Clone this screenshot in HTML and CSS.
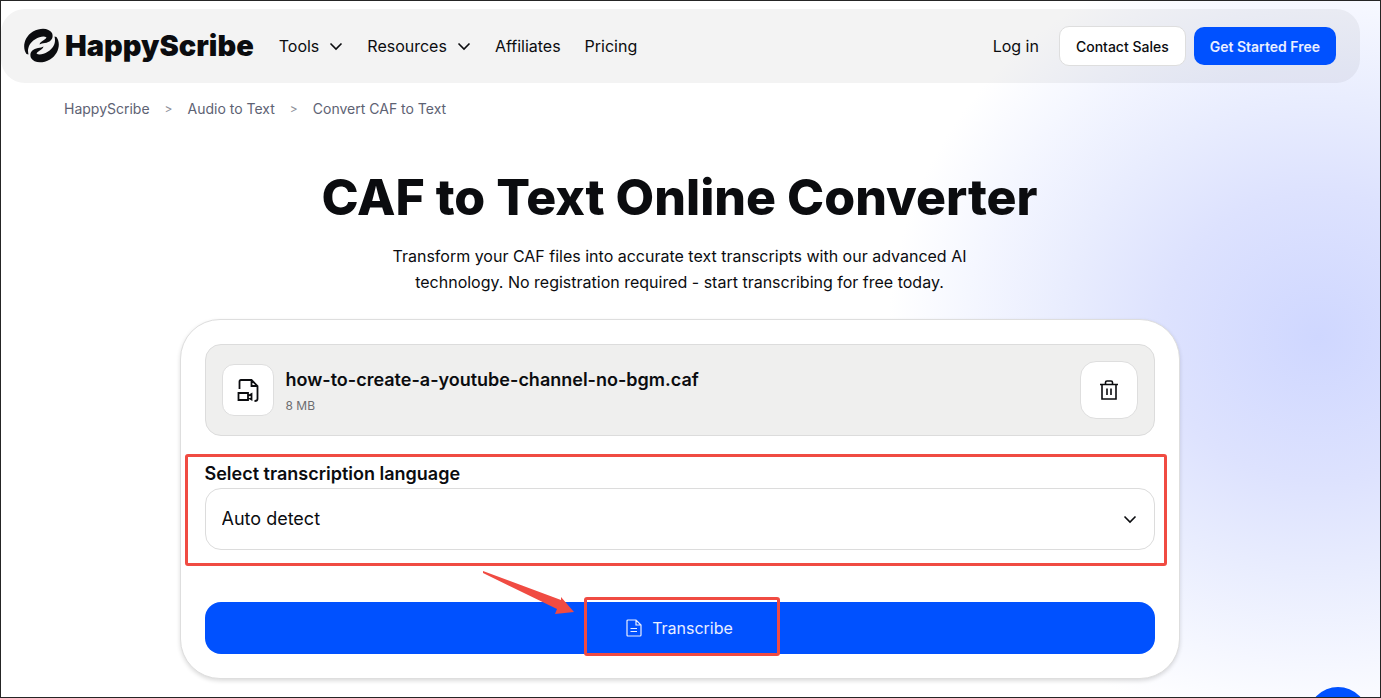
FILE: index.html
```html
<!DOCTYPE html>
<html lang="en">
<head>
<meta charset="utf-8">
<title>CAF to Text Online Converter</title>
<link rel="stylesheet" href="styles.css">
</head>
<body>
<div class="page">
  <header class="topbar">
    <a class="brand" href="#">
      <svg class="brand-mark" viewBox="0 0 36 36" aria-hidden="true">
        <path d="M2.500 26C-2 20 0 9 9 3.500C17 -1 25 0 28 5C30 10 27 14 21 15C18.500 15.400 17 15.500 15.500 16.500C16.500 13 21 12.500 22.500 9.500C19 6.500 8 11 5 18C3.500 22 4 24 4.500 26.500Z"/>
        <path d="M2.500 26C-2 20 0 9 9 3.500C17 -1 25 0 28 5C30 10 27 14 21 15C18.500 15.400 17 15.500 15.500 16.500C16.500 13 21 12.500 22.500 9.500C19 6.500 8 11 5 18C3.500 22 4 24 4.500 26.500Z" transform="rotate(180 17.500 17.500)"/>
      </svg>
      <span class="brand-name">HappyScribe</span>
    </a>
    <nav class="menu" aria-label="Main">
      <button class="menu-item" type="button">Tools <svg class="chevron" viewBox="0 0 14 14" aria-hidden="true"><path d="M1.500 4.500L7 10l5.500-5.500"/></svg></button>
      <button class="menu-item" type="button">Resources <svg class="chevron" viewBox="0 0 14 14" aria-hidden="true"><path d="M1.500 4.500L7 10l5.500-5.500"/></svg></button>
      <a class="menu-item" href="#">Affiliates</a>
      <a class="menu-item" href="#">Pricing</a>
    </nav>
    <div class="actions">
      <a class="login" href="#">Log in</a>
      <button class="btn btn-light" type="button">Contact Sales</button>
      <button class="btn btn-blue" type="button">Get Started Free</button>
    </div>
  </header>

  <nav class="crumbs" aria-label="Breadcrumb">
    <a href="#">HappyScribe</a><span class="sep">&gt;</span><a href="#">Audio to Text</a><span class="sep">&gt;</span><a href="#">Convert CAF to Text</a>
  </nav>

  <main class="main">
    <h1 class="title">CAF to Text Online Converter</h1>
    <p class="lead">Transform your CAF files into accurate text transcripts with our advanced AI technology. No registration required - start transcribing for free today.</p>

    <section class="card">
      <div class="file">
        <span class="file-icon">
          <svg viewBox="0 0 24 24" aria-hidden="true"><path d="M3.500 11V3.500Q3.500 2 5 2H15.500L21.500 8V21Q21.500 23 18.500 23M15.500 2V8H21.500M2.500 15H12V22H2.500ZM12 18L15.500 16V21.500L12 19.500"/></svg>
        </span>
        <div class="file-text">
          <div class="file-name">how-to-create-a-youtube-channel-no-bgm.caf</div>
          <div class="file-size">8 MB</div>
        </div>
        <button class="delete" type="button" aria-label="Delete file">
          <svg viewBox="0 0 20 20" aria-hidden="true"><path d="M1 4.500H19M3 4.500V19H17V4.500M6.500 4.500V2.500Q6.500 1 8 1H12Q13.500 1 13.500 2.500V4.500M8 8.500V15M12 8.500V15"/></svg>
        </button>
      </div>
      <div class="language">
        <label for="language">Select transcription language</label>
        <div class="select-box">
          <select id="language"><option>Auto detect</option></select>
          <svg class="select-chevron" viewBox="0 0 14 14" aria-hidden="true"><path d="M1.500 4.500L7 10l5.500-5.500"/></svg>
        </div>
      </div>
      <div class="submit">
        <svg class="arrow" viewBox="0 0 92 44" aria-hidden="true"><path d="M1 0L79 29V26L92 41L73 43L75 38L1 2Z"/></svg>
        <button class="transcribe" type="button">
          <svg viewBox="0 0 16 18" aria-hidden="true"><path d="M2 1H10L15 6V16Q15 17 14 17H2Q1 17 1 16V2Q1 1 2 1ZM10 1V6H15M4.500 9.500H11M4.500 12.500H11"/></svg>
          Transcribe
        </button>
        <span class="button-mark"></span>
      </div>
    </section>
  </main>
  <button class="chat" type="button" aria-label="Chat"></button>
</div>
</body>
</html>
```

FILE: styles.css
```css
* { box-sizing: border-box; }

body {
  margin: 0;
  color: #0b0c0f;
  font-family: Inter, "Liberation Sans", sans-serif;
  font-size: 16px;
}

a { color: inherit; text-decoration: none; }

button, select { color: inherit; font: inherit; cursor: pointer; }

svg { fill: none; stroke: currentColor; flex: none; }

.page {
  position: relative;
  min-height: 100vh;
  padding: 8px 20px 18px 0;
  overflow: hidden;
  border: 1px solid #252525;
  background: radial-gradient(ellipse 430px 400px at calc(100% - 62px) 336px, #cfd7ff 0%, #dde2fe 36%, #e9edfe 60%, #f5f7ff 82%, #fff 100%);
}

.topbar {
  display: flex;
  align-items: center;
  height: 74px;
  padding: 0 24px 0 23px;
  border-radius: 24px;
  background: rgba(10, 10, 10, 0.05);
}

.brand { display: flex; align-items: center; gap: 5px; }

.brand-mark { width: 36px; height: 36px; fill: currentColor; stroke: none; }

.brand-name { font-size: 29px; font-weight: 900; line-height: 36px; }

.menu { display: flex; align-items: center; gap: 24px; margin-left: 25px; }

.menu-item {
  display: flex;
  align-items: center;
  gap: 10px;
  padding: 0;
  border: 0;
  background: none;
}

.chevron { width: 14px; height: 14px; stroke-width: 1.6; }

.actions { display: flex; align-items: center; gap: 8px; margin-left: auto; }

.login { margin-right: 12px; }

.btn {
  height: 38px;
  padding: 0 16px;
  border: 0;
  border-radius: 10px;
  font-size: 14px;
  font-weight: 500;
}

.btn-light { height: 40px; border: 1px solid #dedede; background: #fff; }

.btn-blue { color: #e9eeff; font-weight: 600; background: #0051ff; }

.crumbs {
  display: flex;
  align-items: center;
  gap: 15px;
  padding: 16px 0 0 63px;
  color: #5d6273;
  font-size: 14px;
  line-height: 20px;
}

.sep { color: #8d8f99; font-size: 12px; }

.main {
  display: flex;
  flex-direction: column;
  align-items: center;
  padding-right: 2px;
}

.title {
  margin: 48px 0 0;
  font-size: 50px;
  font-weight: 800;
  line-height: 60px;
  text-align: center;
}

.lead {
  width: 600px;
  max-width: 100%;
  margin: 16px 0 24px;
  line-height: 26px;
  text-align: center;
}

.card {
  width: 1000px;
  max-width: 100%;
  padding: 24px;
  border: 1px solid #dedede;
  border-radius: 40px;
  background: #fff;
  box-shadow: 0 2px 4px rgba(0, 0, 0, 0.14);
}

.file {
  display: flex;
  align-items: center;
  gap: 12px;
  padding: 16px;
  border: 1px solid #dcdcdc;
  border-radius: 16px;
  background: #efefee;
}

.file-icon {
  display: grid;
  place-items: center;
  width: 52px;
  height: 52px;
  border: 1px solid #dedede;
  border-radius: 12px;
  background: #fff;
}

.file-icon svg { width: 24px; height: 24px; stroke-width: 1.8; }

.file-text { flex: 1; padding-top: 2px; }

.file-name { font-size: 18px; font-weight: 600; line-height: 28px; }

.file-size { margin-top: 2px; color: #6d6d70; font-size: 12px; line-height: 20px; }

.delete {
  display: grid;
  place-items: center;
  width: 58px;
  height: 58px;
  padding: 0;
  border: 1px solid #dedede;
  border-radius: 16px;
  background: #fff;
}

.delete svg { width: 20px; height: 20px; stroke-width: 1.6; }

.language {
  margin: 18px -12px 0 -20px;
  padding: 3px 9px 13px 17px;
  border: 3px solid #f04b42;
  border-radius: 3px;
}

.language label {
  display: block;
  margin-bottom: 1px;
  font-size: 18px;
  font-weight: 600;
  line-height: 27px;
}

.select-box { position: relative; }

.select-box select {
  display: block;
  width: 100%;
  height: 62px;
  padding: 0 16px 2px;
  appearance: none;
  border: 1px solid #dcdcdc;
  border-radius: 16px;
  background: #fff;
  font-size: 18px;
}

.select-chevron {
  position: absolute;
  top: 24px;
  right: 18px;
  width: 14px;
  height: 14px;
  stroke-width: 1.6;
  pointer-events: none;
}

.submit { position: relative; margin-top: 36px; }

.transcribe {
  display: flex;
  align-items: center;
  justify-content: center;
  gap: 10px;
  width: 100%;
  height: 52px;
  border: 0;
  border-radius: 16px;
  color: #e9eeff;
  background: #0051ff;
}

.transcribe svg { width: 16px; height: 18px; stroke-width: 1.2; }

.button-mark {
  position: absolute;
  top: -5px;
  left: calc(50% - 96px);
  width: 196px;
  height: 59px;
  border: 3px solid #f04b42;
  border-radius: 3px;
  pointer-events: none;
}

.arrow {
  position: absolute;
  top: -31px;
  left: calc(50% - 198px);
  width: 92px;
  height: 44px;
  fill: #f04b42;
  stroke: none;
}

.chat {
  position: absolute;
  bottom: -50px;
  right: 12px;
  width: 60px;
  height: 60px;
  border: 0;
  border-radius: 50%;
  background: #0051ff;
}
```
